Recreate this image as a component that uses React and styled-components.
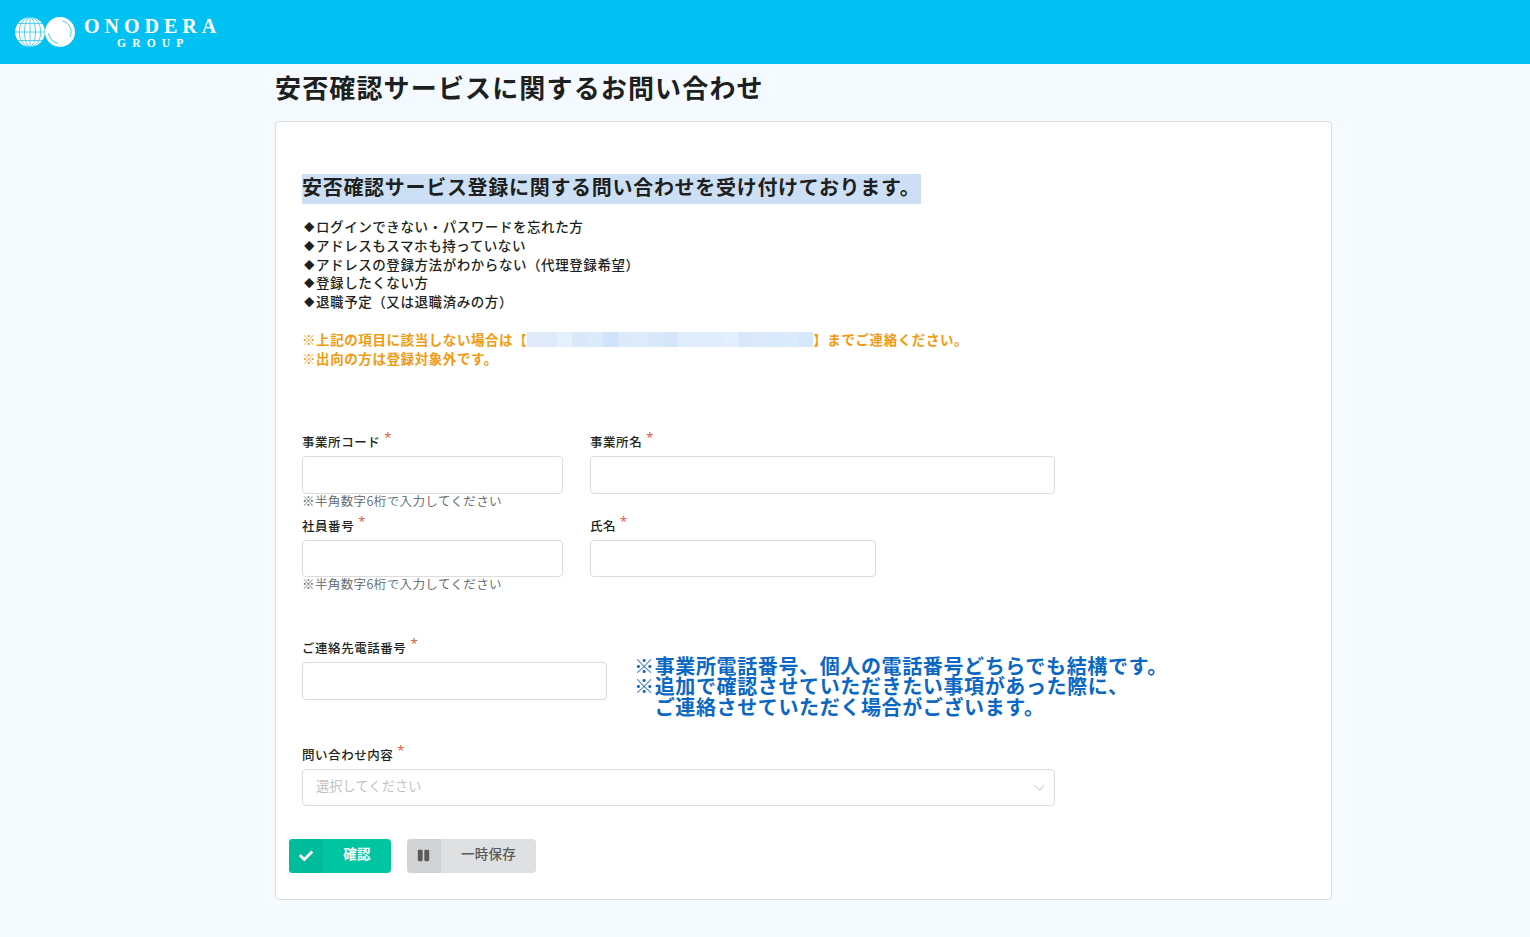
import styled, { createGlobalStyle } from "styled-components";
import { FaCheck, FaPause } from "react-icons/fa";

const notes = [
    "ログインできない・パスワードを忘れた方",
    "アドレスもスマホも持っていない",
    "アドレスの登録方法がわからない（代理登録希望）",
    "登録したくない方",
    "退職予定（又は退職済みの方）",
];

const maskColors = [
    "#dfebfa", "#dfebfb", "#e5f0fd", "#dae8fa", "#dcebfb", "#cfe4fb", "#dcebfc",
    "#dfebfb", "#dae8fb", "#d5e6fb", "#dfecfc", "#e1edfc", "#e0edfd", "#e3effe",
    "#d8e7fa", "#dbe9fb", "#dae9fc", "#dbebfc", "#d5e9fd",
];

const App = () => {
    return (
        <>
            <GlobalStyle />
            <Header>
                <Logo />
            </Header>
            <Page>
                <Title>安否確認サービスに関するお問い合わせ</Title>
                <Card>
                    <Lead><mark>安否確認サービス登録に関する問い合わせを受け付けております。</mark></Lead>
                    <Notes>
                        {notes.map((note) => (<li key={note}><Diamond>◆</Diamond>{note}</li>))}
                    </Notes>
                    <Warning>
                        <p>
                            ※上記の項目に該当しない場合は【
                            <Mask>{maskColors.map((color, i) => (<MaskCell $color={color} key={i} />))}</Mask>
                            】までご連絡ください。
                        </p>
                        <p>※出向の方は登録対象外です。</p>
                    </Warning>
                    <Row $top={66.5}>
                        <Field label="事業所コード" width={261} hint="※半角数字6桁で入力してください" />
                        <Field label="事業所名" width={465} />
                    </Row>
                    <Row $top={8}>
                        <Field label="社員番号" width={261} height={37} hint="※半角数字6桁で入力してください" />
                        <Field label="氏名" width={286} height={37} />
                    </Row>
                    <Row $top={47}>
                        <Field label="ご連絡先電話番号" width={305} />
                        <PhoneNote>
                            ※事業所電話番号、個人の電話番号どちらでも結構です。<br />
                            ※追加で確認させていただきたい事項があった際に、<br />
                            {"\u3000"}ご連絡させていただく場合がございます。
                        </PhoneNote>
                    </Row>
                    <Row $top={29}>
                        <div>
                            <Label>問い合わせ内容<Required>*</Required></Label>
                            <Select>
                                選択してください
                                <svg width="11" height="8" viewBox="0 0 11 8" fill="none" stroke="#bcbcbc">
                                    <path d="M1 1.5 5.5 6.3 10 1.5" />
                                </svg>
                            </Select>
                        </div>
                    </Row>
                    <Actions>
                        <Button $width={102} $bg="#00c5a0" $side="#00bc9a" $color="#fff" $bold>
                            <span><FaCheck size={14} /></span>
                            <b>確認</b>
                        </Button>
                        <Button $width={129} $bg="#dfe0e1" $side="#d1d2d3" $color="#5a5a5a">
                            <span><FaPause size={13} /></span>
                            <b>一時保存</b>
                        </Button>
                    </Actions>
                </Card>
            </Page>
        </>
    )
}

const Logo = () => {
    return (
        <Brand>
            <svg width="62" height="32" viewBox="0 0 62 32" fill="none">
                <circle cx="16" cy="16" r="14.8" fill="#fff" />
                <g stroke="#3fcbf3" strokeWidth="0.9">
                    <path d="M16 1v30M1 16h30M4 7.5h24M4 24.5h24" />
                    <ellipse cx="16" cy="16" rx="5.5" ry="14.8" />
                    <ellipse cx="16" cy="16" rx="10.8" ry="14.8" />
                </g>
                <circle cx="46" cy="16" r="15" fill="#fff" />
                <path d="M34.6 17.5a11.5 11.5 0 0 0 9.5 9.8M48.500 4.900a11.5 11.5 0 0 1 7.500 16" stroke="#3fcbf3" />
            </svg>
            <BrandText>
                <strong>ONODERA</strong>
                <small>GROUP</small>
            </BrandText>
        </Brand>
    )
}

const Field = ({label, width, height, hint}) => {
    return (
        <FieldBox>
            <Label>{label}<Required>*</Required></Label>
            <Input aria-label={label} $width={width} $height={height} />
            {hint && <Hint>{hint}</Hint>}
        </FieldBox>
    )
}

const GlobalStyle = createGlobalStyle`
    * {
        box-sizing: border-box;
    }
    body {
        margin: 0;
        min-height: 937px;
        background: #f4faff;
        color: #1d1f20;
        font-family: "Noto Sans CJK JP", sans-serif;
    }
    h1, h2, p, ul {
        margin: 0;
        padding: 0;
    }
`

const Header = styled.header`
    height: 64px;
    padding: 16px 14px;
    background: #01c1f3;
`

const Brand = styled.div`
    display: flex;
    gap: 8px;
    color: #fff;
    font-family: "Liberation Serif", serif;
`

const BrandText = styled.div`
    display: flex;
    flex-direction: column;
    strong {
        font-size: 20px;
        line-height: 20px;
        letter-spacing: 5px;
    }
    small {
        padding-left: 33px;
        font-size: 11.5px;
        font-weight: bold;
        line-height: 14px;
        letter-spacing: 6.2px;
    }
`

const Page = styled.main`
    width: 1057px;
    margin-left: 275px;
`

const Title = styled.h1`
    height: 57px;
    font-size: 26px;
    font-weight: 600;
    line-height: 45px;
    letter-spacing: 1.15px;
`

const Card = styled.section`
    height: 779px;
    padding: 52px 26px 0;
    background: #fff;
    border: 1px solid #d9dddf;
    border-radius: 4px;
`

const Lead = styled.h2`
    height: 30px;
    font-size: 20px;
    font-weight: 600;
    line-height: 26px;
    letter-spacing: 0.7px;
    mark {
        display: inline-block;
        width: 619px;
        height: 30px;
        background: #cddff4;
        color: inherit;
        white-space: nowrap;
    }
`

const Notes = styled.ul`
    margin-top: 13.3px;
    list-style: none;
    font-size: 13.5px;
    font-weight: 500;
    line-height: 18.7px;
    letter-spacing: 0.57px;
    li {
        display: flex;
        height: 18.7px;
    }
`

const Diamond = styled.span`
    width: 14px;
    padding: 1px 0 0 2px;
    font-size: 10.5px;
`

const Warning = styled.div`
    margin-top: 19.2px;
    color: #f39a12;
    font-size: 13.5px;
    font-weight: 600;
    line-height: 18.7px;
    letter-spacing: 0.58px;
    p {
        display: flex;
        height: 18.7px;
        white-space: nowrap;
    }
`

const Mask = styled.span`
    display: flex;
    width: 286px;
    height: 15px;
    margin-top: 2px;
`

const MaskCell = styled.i`
    flex: 1;
    background: ${(props) => props.$color};
`

const Row = styled.div`
    display: flex;
    gap: 27px;
    margin-top: ${(props) => props.$top}px;
`

const FieldBox = styled.div`
    display: flex;
    flex-direction: column;
`

const Label = styled.label`
    display: flex;
    height: 22px;
    font-size: 12.5px;
    font-weight: 500;
    line-height: 15.5px;
    letter-spacing: 0.55px;
`

const Required = styled.span`
    margin: -4px 0 0 4px;
    color: #d9603f;
    font-family: "Noto Sans", sans-serif;
    font-size: 13px;
    font-weight: 400;
`

const Input = styled.input`
    width: ${(props) => props.$width}px;
    height: ${(props) => props.$height || 38}px;
    padding: 0 14px;
    background: #fff;
    border: 1px solid #dcdcdd;
    border-radius: 4px;
`

const Hint = styled.p`
    height: 16px;
    color: #56636c;
    font-size: 12.5px;
    font-weight: 350;
    line-height: 13px;
    letter-spacing: 0.4px;
`

const PhoneNote = styled.p`
    margin-top: 16px;
    color: #0a68c4;
    font-size: 20px;
    font-weight: 600;
    line-height: 20.6px;
    letter-spacing: 0.63px;
    white-space: nowrap;
`

const Select = styled.div`
    display: flex;
    align-items: center;
    justify-content: space-between;
    width: 753px;
    height: 37px;
    padding: 0 9px 3px 13px;
    border: 1px solid #dcdcdd;
    border-radius: 4px;
    color: #bcbcbc;
    font-size: 13.2px;
    font-weight: 350;
    letter-spacing: 0.1px;
    svg {
        margin-top: 4px;
    }
`

const Actions = styled.div`
    display: flex;
    gap: 16px;
    margin: 33px 0 0 -13px;
`

const Button = styled.button`
    display: flex;
    width: ${(props) => props.$width}px;
    height: 34px;
    padding: 0;
    overflow: hidden;
    background: ${(props) => props.$bg};
    border: none;
    border-radius: 4px;
    color: ${(props) => props.$color};
    font-family: inherit;
    font-size: 13.5px;
    span {
        display: flex;
        align-items: center;
        justify-content: center;
        width: 34px;
        height: 34px;
        padding-right: 1px;
        background: ${(props) => props.$side};
    }
    b {
        flex: 1;
        font-weight: ${(props) => props.$bold ? 700 : 500};
        line-height: 29px;
        letter-spacing: 0.3px;
    }
`

export default App;
